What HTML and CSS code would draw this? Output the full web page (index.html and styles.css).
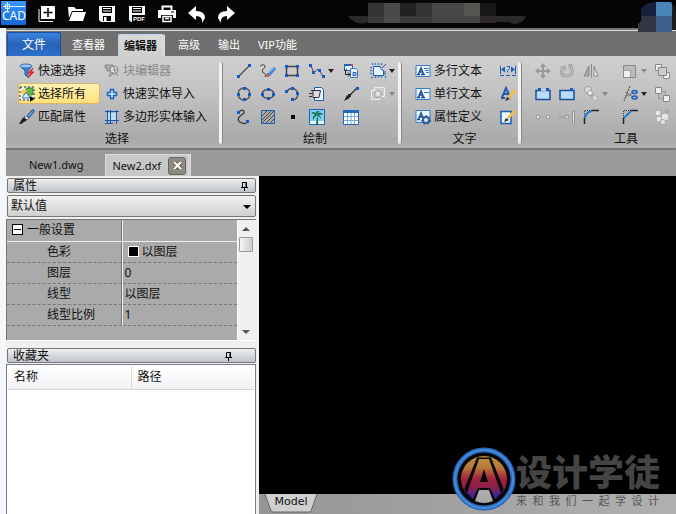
FILE: index.html
```html
<!DOCTYPE html>
<html lang="zh-CN">
	<head>
		<meta charset="UTF-8">
		<title>CAD</title>
		<link rel="stylesheet" href="styles.css">
	</head>
	<body>
		<header class="titlebar">
			<svg class="logo" width="26" height="26" viewBox="0 0 26 26">
				<defs><linearGradient id="lg" x1="0" y1="0" x2="0" y2="1"><stop offset="0" stop-color="#3c98ff"/><stop offset="1" stop-color="#1166d6"/></linearGradient></defs>
				<rect x="0" y="1" width="25" height="24" rx="1" fill="url(#lg)"/>
				<path d="M2 6.500H24M6.500 2V11M4.500 4.500h4v4h-4z" fill="none" stroke="#d8ecff"/>
				<text x="1" y="20" class="logo-text">CAD</text>
			</svg>
			<nav class="quick">
				<button aria-label="新建"><svg width="18" height="18" viewBox="0 0 18 18"><path d="M3 1h13q1 0 1 1v12H3z" fill="#fff"/><path d="M1 4v12.500h14" fill="none" stroke="#fff" stroke-width="1"/><path d="M10 3v9M5.500 7.500h9" stroke="#000" stroke-width="1.500"/></svg></button>
				<button aria-label="打开"><svg width="18" height="18" viewBox="0 0 18 18"><path d="M0 2h6l2 2h7v2H4L1 13z" fill="#fff"/><path d="M4.500 7H18l-3 9H1z" fill="#fff"/></svg></button>
				<button aria-label="保存"><svg width="18" height="18" viewBox="0 0 18 18"><path d="M1 1h16v16H3l-2-2z" fill="#fff"/><path d="M4 2h10v6H4zM5 11h8v5H5z" fill="#000"/><path d="M5 3h8v1H5zM5 5.500h8v1H5zM6 12h2.500v4H6z" fill="#fff"/></svg></button>
				<button aria-label="另存为PDF"><svg width="18" height="18" viewBox="0 0 18 18"><path d="M1 1h16v16H3l-2-2z" fill="#fff"/><path d="M4 2h10v6H4zM4 10h13v7H4z" fill="#000"/><path d="M5 3h8v1H5zM5 5.500h8v1H5z" fill="#fff"/><text x="5" y="16" class="pdf">PDF</text></svg></button>
				<button aria-label="打印"><svg width="18" height="18" viewBox="0 0 18 18"><path d="M4.500 5V1.500h9V5" fill="none" stroke="#fff" stroke-width="2"/><path d="M0 5h18v8h-3v-3H3v3H0z" fill="#fff"/><path d="M13 6.500h3v1h-3z" fill="#000"/><path d="M5 11.500h8v5H5zM7 13.500h4" fill="none" stroke="#fff" stroke-width="1.500"/></svg></button>
				<button aria-label="撤销"><svg width="18" height="18" viewBox="0 0 18 18"><path d="M8 1v5q9 0 9 7l-3 5q1-7-6-7v4L0 8z" fill="#fff"/></svg></button>
				<button aria-label="重做"><svg width="18" height="18" viewBox="0 0 18 18"><path d="M9 1v5q-9 0-9 7l3 5q-1-7 6-7v4l8-7z" fill="#fff"/></svg></button>
			</nav>
			<svg class="caption" width="180" height="22" viewBox="0 0 180 22">
				<path d="M0 13h178q-3 8-12 8l-6-2H20q-12 5-20-6z" fill="#2a2a2a"/>
				<path d="M20 0h16v13H20z" fill="#343435"/><path d="M36 0h16v20H36z" fill="#4a4a4c"/><path d="M52 0h16v13H52z" fill="#222"/><path d="M68 0h16v13H68z" fill="#343435"/><path d="M84 0h32v13H84z" fill="#484849"/><path d="M116 0h16v13h-16z" fill="#555552"/><path d="M132 0h16v13h-16z" fill="#191716"/>
				<path d="M20 13h16v7H20zM52 13h32v7H52z" fill="#3a3a3b"/><path d="M84 13h48v7H84z" fill="#454546"/><path d="M132 13h16v7h-16z" fill="#30292b"/>
			</svg>
			<svg class="avatar" width="38" height="30" viewBox="0 0 38 30">
				<path d="M3 14V7q4-7 15-7v14z" fill="#17213e"/><path d="M18 0h14q2 0 2 2v12H18z" fill="#4886ba"/><path d="M3 14h15v16H0v-8q4-2 3-8z" fill="#333743"/><path d="M18 14h16v16H18z" fill="#3b5f88"/><path d="M34 2q4 3 4 10v16h-4z" fill="#1d1d1e"/>
			</svg>
		</header>
		<div class="app">
			<nav class="tabs">
				<button class="tab file">文件</button>
				<button class="tab">查看器</button>
				<button class="tab active">编辑器</button>
				<button class="tab">高级</button>
				<button class="tab">输出</button>
				<button class="tab">VIP功能</button>
			</nav>
			<div class="ribbon">
				<section class="group select-group">
					<div class="tools">
						<button><svg width="16" height="16" viewBox="0 0 16 16"><path d="M1 3q6 3 12 0L9 8v6l-3-2V8z" fill="#3c7fc4" stroke="#2c62a4"/><ellipse cx="7" cy="3" rx="6" ry="2" fill="#9ec6ea" stroke="#2c6bb5"/><path d="M14 5l-5 5h3l-3 5 6-6h-3z" fill="#f33" stroke="#d22"/></svg>快速选择</button>
						<button disabled><svg width="16" height="16" viewBox="0 0 16 16"><path d="M1 2h8v3H6v3H3V5H1z" fill="#aaa" stroke="#888"/><circle cx="10" cy="7" r="4" fill="#ddd" stroke="#888"/><path d="M10 4v3h3M10 7l4 6M5 14l2-5 3 1z" fill="#bbb" stroke="#888"/></svg>块编辑器</button>
						<button class="hot"><svg width="16" height="16" viewBox="0 0 16 16"><rect x="1" y="1" width="14" height="13" fill="#eef4f4" stroke="#222" stroke-dasharray="2 2"/><rect x="7" y="2" width="7" height="7" rx="1" fill="#60b54b" stroke="#358626"/><circle cx="5" cy="6" r="3" fill="#f1ce55"/><path d="M3 12l4-6 4 6z" fill="#dcefff" stroke="#3772bf"/><path d="M11 10v6l2-2 3-1z"/></svg>选择所有</button>
						<button><svg width="16" height="16" viewBox="0 0 16 16"><path d="M6.500 3.500h3v3h3v3h-3v3h-3v-3h-3v-3h3z" fill="#d9edff" stroke="#1c63bd" stroke-width="1.500"/></svg>快速实体导入</button>
						<button><svg width="16" height="16" viewBox="0 0 16 16"><path d="M8 7l5-6q3-1 2 2l-5 6z" fill="#5a9ad8" stroke="#274f88"/><path d="M6 7l4 3-2 1-6 4H0l3-5z" fill="#222"/><path d="M6 8l3 2" stroke="#ddd" stroke-width="2"/></svg>匹配属性</button>
						<button><svg width="16" height="16" viewBox="0 0 16 16"><path d="M4 4h8v7H4z" fill="#bbdcf5"/><path d="M3.500 1v14M6.500 1v14M12.500 1v14M1 2.500h14M1 11.500h14M1 14.500h8" stroke="#1458ae"/></svg>多边形实体输入</button>
					</div>
					<h2>选择</h2>
				</section>
				<section class="group draw-group">
					<div class="tools">
						<button aria-label="直线"><svg width="16" height="16" viewBox="0 0 16 16"><path d="M3 13L13 3" stroke="#555" stroke-width="1.500"/><path d="M1 12h3v3H1zM12 1h3v3h-3z" fill="#145cc4"/></svg></button>
						<button aria-label="手绘"><svg width="16" height="16" viewBox="0 0 16 16"><path d="M0 3q5-3 5 1-5 5-1 6 3 1 1 4" fill="none" stroke="#444"/><path d="M7 11l5-6q3-2 4 1l-6 7-4 1z" fill="#4287d4"/><path d="M8.500 10l5-5" stroke="#b8d6f4"/><path d="M6 14l1-4 3 3z" fill="#e24834"/></svg></button>
						<button aria-label="矩形"><svg width="16" height="16" viewBox="0 0 16 16"><path d="M2.500 3.500h11v9h-11z" fill="none" stroke="#444" stroke-width="1.500"/><path d="M1 2h3v3H1zM12 2h3v3h-3zM1 11h3v3H1zM12 11h3v3h-3z" fill="#145cc4"/></svg></button>
						<button class="drop" aria-label="多段线"><svg width="16" height="16" viewBox="0 0 16 16"><path d="M2 3l3 7q4-6 6-2l3 6" fill="none" stroke="#444"/><path d="M0 1h3v3H0zM3 8h3v3H3zM9 6h3v3H9zM13 12h3v3h-3z" fill="#145cc4"/></svg></button>
						<button aria-label="插入块"><svg width="16" height="16" viewBox="0 0 16 16"><path d="M1.500 1.500h8v6h-8z" fill="#e6f3ff" stroke="#2266bd"/><path d="M1 1h9v2H1z" fill="#2266bd"/><path d="M8 1h2v2H8z" fill="#e33"/><path d="M7.500 5.500h5l2 2v7h-7z" fill="#eaf5ff" stroke="#3b7cc9"/><path d="M10 9.500h3v3h-3z" fill="#9cc6ee" stroke="#2266bd"/><path d="M2.500 8v3.500H7M5 9.500l2 2-2 2M4 6l-1.500 2L1 6" fill="none" stroke="#222"/></svg></button>
						<button class="drop" aria-label="区域"><svg width="16" height="16" viewBox="0 0 16 16"><path d="M3.500 3.500h7q0 4 3 4v5h-10z" fill="#e5f4ff" stroke="#1c5eb4"/><path d="M2 0l1 2M5 0l1 2M8 0l1 2M11 0l1 2M0 4l2 1M0 7l2 1M0 10l2 1M3 14l-2 1M6 13l-1 2M9 13l-1 2M12 13l-1 2M15 13l1 2M16 1l-4 4M14 9h2M14 11h2" stroke="#1c5eb4"/></svg></button>
						<button aria-label="圆"><svg width="16" height="16" viewBox="0 0 16 16"><circle cx="8" cy="8" r="6" fill="none" stroke="#555" stroke-width="1.500"/><path d="M7 1h3v3H7zM1 7h3v3H1zM12 7h3v3h-3zM7 12h3v3H7z" fill="#145cc4"/></svg></button>
						<button aria-label="椭圆"><svg width="16" height="16" viewBox="0 0 16 16"><ellipse cx="8" cy="8" rx="6" ry="4.500" fill="none" stroke="#555" stroke-width="1.500"/><path d="M7 2h3v3H7zM1 7h3v3H1zM12 7h3v3h-3zM7 11h3v3H7z" fill="#145cc4"/></svg></button>
						<button aria-label="圆弧"><svg width="16" height="16" viewBox="0 0 16 16"><path d="M2 6q7-8 12 1 0 7-6 7" fill="none" stroke="#555" stroke-width="1.500"/><path d="M1 4h3v3H1zM7 1h3v3H7zM12 6h3v3h-3zM7 12h3v3H7z" fill="#145cc4"/></svg></button>
						<button aria-label="剪贴"><svg width="16" height="16" viewBox="0 0 16 16"><path d="M5.500 1.500h7l2 2v11h-9z" fill="#e8f4ff" stroke="#1c5eb4"/><path d="M4 4.500h7.500l-1.500 7H4z" fill="#ddd" stroke="#333"/><path d="M2 4.500h2M0 7.500h4M0 10.500h3" stroke="#333"/></svg></button>
						<button aria-label="引线"><svg width="16" height="16" viewBox="0 0 16 16"><path d="M4 12L14 2" stroke="#333" stroke-width="1.500"/><path d="M1 15l3-6 3 3zM5 8h3v3H5z" fill="#222"/><path d="M13 1h3v3h-3z" fill="#145cc4"/></svg></button>
						<button class="drop" disabled aria-label="遮罩"><svg width="16" height="16" viewBox="0 0 16 16"><path d="M4.500 1.500h10v9h-10z" fill="#ccc" stroke="#eee"/><path d="M1.500 4.500h8v9h-8z" fill="#c8c8c8" stroke="#eee"/><circle cx="8" cy="8" r="3.500" fill="#ddd" stroke="#999"/></svg></button>
						<button aria-label="样条"><svg width="16" height="16" viewBox="0 0 16 16"><path d="M2 3q6-4 6 1-9 6-4 9 4 3 8 0" fill="none" stroke="#444" stroke-width="1.500"/><path d="M1 2h3v3H1zM10 11h3v3h-3z" fill="#145cc4"/></svg></button>
						<button aria-label="填充"><svg width="16" height="16" viewBox="0 0 16 16"><path d="M1.500 1.500h13v13h-13z" fill="#aaa" stroke="#1c5eb4"/><path d="M2 7l5-5M2 11l9-9M2 14L14 2M6 14l8-8M10 14l4-4" stroke="#444"/></svg></button>
						<button aria-label="点"><svg width="16" height="16" viewBox="0 0 16 16"><path d="M7 6h4v4H7z"/></svg></button>
						<button aria-label="图像"><svg width="16" height="16" viewBox="0 0 16 16"><path d="M.5 .5h15v15H.5z" fill="#7fcdf2" stroke="#1768ae"/><path d="M1 12h14v3H1z" fill="#e8f4f8"/><path d="M8 6q2 4 1 9H7q1-5 1-9z" fill="#15734b"/><path d="M8 5Q4 1 2 5q3-1 4 1-3 1-2 5 1-3 4-5 3 2 4 4 0-3-2-4 2-1 4 0-1-4-6-1 1-2 3-2-3-2-4 0z" fill="#13734b"/></svg></button>
						<button aria-label="表格"><svg width="16" height="16" viewBox="0 0 16 16"><path d="M.5 1.500h15v14H.5z" fill="#fff" stroke="#2267bc"/><path d="M0 1h16v3H0z" fill="#2267bc"/><path d="M1 7.500h14M1 11.500h14M4.500 4v11M8 4v11M11.500 4v11" stroke="#73a8dc"/></svg></button>
					</div>
					<h2>绘制</h2>
				</section>
				<section class="group text-group">
					<div class="tools">
						<button><svg width="16" height="16" viewBox="0 0 16 16"><path d="M1 2.500h14v11H1z" fill="#edf6ff" stroke="#397cc4"/><path d="M2 11.500h3M6 11.500h4M3.500 11L6 5l2.500 6M4 9h4" fill="none" stroke="#164c9b" stroke-width="1.500"/><path d="M9 5.500h5M10 7.500h4M11 9.500h3" stroke="#397cc4"/></svg>多行文本</button>
						<button aria-label="标注"><svg width="16" height="16" viewBox="0 0 16 16"><path d="M.5 3v8M15.500 3v8" stroke="#1c5eb4"/><path d="M1 6.500l4-3v6zM15 6.500l-4-3v6z" fill="#1c5eb4"/><path d="M6.500 3.500h3v2l-2 2v2" fill="none" stroke="#1c5eb4"/><path d="M0 12.500h16" stroke="#1c5eb4" stroke-dasharray="4 2"/></svg></button>
						<button><svg width="16" height="16" viewBox="0 0 16 16"><path d="M1 2.500h14v11H1z" fill="#edf6ff" stroke="#397cc4"/><path d="M2 11.500h3M6 11.500h4M3.500 11L6 5l2.500 6M4 9h4" fill="none" stroke="#164c9b" stroke-width="1.500"/><path d="M9 6.500h5" stroke="#397cc4"/></svg>单行文本</button>
						<button aria-label="文字样式"><svg width="16" height="16" viewBox="0 0 16 16"><path d="M2 11.500L6 2l4 9M3 8h6M1 12h4" fill="none" stroke="#1c5eb4" stroke-width="2"/><path d="M9 11l6-7" stroke="#f3c142" stroke-width="3"/><path d="M5 15l2-4 3 2z" fill="#5a2716"/></svg></button>
						<button><svg width="16" height="16" viewBox="0 0 16 16"><path d="M1 1.500h14v12H1z" fill="#edf6ff" stroke="#397cc4"/><path d="M2 10.500h3M3.500 10L6 4l2.500 6M4 8h4" fill="none" stroke="#164c9b" stroke-width="1.500"/><circle cx="11" cy="11" r="3" fill="#d9e9fa" stroke="#315e96" stroke-width="2"/><circle cx="11" cy="11" r="4.500" fill="none" stroke="#315e96" stroke-dasharray="2 2"/></svg>属性定义</button>
						<button aria-label="编辑文字"><svg width="16" height="16" viewBox="0 0 16 16"><path d="M1 2.500h10v12H1z" fill="#edf6ff" stroke="#1c5eb4" stroke-width="1.500"/><path d="M8 9l7-7" stroke="#f3c142" stroke-width="3"/><path d="M4 13l2-4 3 2z" fill="#222"/></svg></button>
					</div>
					<h2>文字</h2>
				</section>
				<section class="group tool-group">
					<div class="tools">
						<button disabled aria-label="移动"><svg width="16" height="16" viewBox="0 0 16 16"><path d="M8 1v14M1 8h14" stroke="#999" stroke-width="2"/><path d="M8 0l3 4H5zM8 16l3-4H5zM0 8l4-3v6zM16 8l-4-3v6z" fill="#999"/></svg></button>
						<button disabled aria-label="旋转"><svg width="16" height="16" viewBox="0 0 16 16"><path d="M4 4Q0 13 8 13q8-1 4-9" fill="none" stroke="#999" stroke-width="3"/><path d="M4 4Q0 13 8 13q8-1 4-9" fill="none" stroke="#d4d4d4"/><path d="M1 3h6v5zM9 1h6l-5 5z" fill="#aaa"/></svg></button>
						<button disabled aria-label="镜像"><svg width="16" height="16" viewBox="0 0 16 16"><path d="M8.500 1v14" stroke="#888"/><path d="M6 3v10H1z" fill="#aaa" stroke="#888"/><path d="M11 3v10h4z" fill="#eee" stroke="#888"/></svg></button>
						<button class="drop" disabled aria-label="缩放"><svg width="16" height="16" viewBox="0 0 16 16"><path d="M1.500 2.500h12v12h-12z" fill="#bbb" stroke="#888"/><path d="M1.500 7.500h7v7h-7z" fill="#eee" stroke="#666" stroke-dasharray="1 1"/></svg></button>
						<button disabled aria-label="前置"><svg width="16" height="16" viewBox="0 0 16 16"><path d="M1.500 1.500h6v6h-6zM9.500 9.500h6v6h-6z" fill="#eee" stroke="#888"/><path d="M4.500 4.500h8v8h-8z" fill="#ccc" stroke="#888"/></svg></button>
						<button aria-label="打断"><svg width="16" height="16" viewBox="0 0 16 16"><path d="M1 4.500h14v9H1z" fill="#b9dcfb" stroke="#1c4e94" stroke-width="1.500"/><path d="M6 3h5v2H6z" fill="#ccc"/><path d="M3 2h3v3H3zM11 2h3v3h-3z" fill="#145cc4"/></svg></button>
						<button aria-label="打断于点"><svg width="16" height="16" viewBox="0 0 16 16"><path d="M1 4.500h14v9H1z" fill="#b9dcfb" stroke="#1c4e94" stroke-width="1.500"/><path d="M11 2h3v3h-3z" fill="#145cc4"/></svg></button>
						<button class="drop" disabled aria-label="复制"><svg width="16" height="16" viewBox="0 0 16 16"><circle cx="5" cy="4" r="3.500" fill="#ddd" stroke="#999"/><path d="M5 6l7 7" stroke="#999" stroke-width="2"/><path d="M9 11l3-2 3 4-3 2z" fill="#ddd" stroke="#aaa"/><circle cx="7" cy="7" r="2.500" fill="#eee" stroke="#999"/></svg></button>
						<button class="drop" aria-label="修剪"><svg width="16" height="16" viewBox="0 0 16 16"><path d="M8 0L2 15" stroke="#333" stroke-dasharray="2 1"/><path d="M3 6l8 5M3 11l8-4" stroke="#777"/><ellipse cx="12.500" cy="6" rx="2.500" ry="1.500" fill="none" stroke="#145cc4" stroke-width="1.500"/><ellipse cx="12.500" cy="11.500" rx="2.500" ry="1.500" fill="none" stroke="#145cc4" stroke-width="1.500"/></svg></button>
						<button disabled aria-label="后置"><svg width="16" height="16" viewBox="0 0 16 16"><path d="M4.500 5.500h7v7h-7z" fill="#bbb" stroke="#999"/><path d="M1.500 1.500h6v6h-6zM9.500 9.500h6v6h-6z" fill="#eee" stroke="#888"/></svg></button>
						<button disabled aria-label="合并"><svg width="16" height="16" viewBox="0 0 16 16"><path d="M1.500 6.500h3v3h-3zM11.500 6.500h3v3h-3z" fill="#eee" stroke="#999"/><path d="M6 8h4" stroke="#999" stroke-dasharray="1 1"/></svg></button>
						<button disabled aria-label="延伸"><svg width="16" height="16" viewBox="0 0 16 16"><path d="M0 8h7" stroke="#888" stroke-dasharray="2 1"/><path d="M6.500 6.500h3v3h-3zM13.500 2.500h2v12h-2z" fill="#ddd" stroke="#999"/></svg></button>
						<button aria-label="圆角"><svg width="16" height="16" viewBox="0 0 16 16"><path d="M1.500 15V9M8 1.500h8" stroke="#222" stroke-width="1.500"/><path d="M1.500 9V1.500H8" fill="none" stroke="#333" stroke-dasharray="1 1"/><path d="M2 9q1-6 7-7" fill="none" stroke="#247bd5" stroke-width="2"/></svg></button>
						<button aria-label="倒角"><svg width="16" height="16" viewBox="0 0 16 16"><path d="M1.500 15V9M8 1.500h8" stroke="#222" stroke-width="1.500"/><path d="M1.500 9V1.500H8" fill="none" stroke="#333" stroke-dasharray="1 1"/><path d="M2 9l7-7" stroke="#247bd5" stroke-width="2"/></svg></button>
						<button disabled aria-label="分解"><svg width="16" height="16" viewBox="0 0 16 16"><g fill="#e6e6e6" stroke="#aaa"><circle cx="4" cy="4" r="3"/><circle cx="5" cy="10" r="3"/><circle cx="11" cy="8" r="4"/><circle cx="9" cy="13" r="2.500"/></g><circle cx="13" cy="2" r="2" fill="#aaa"/></svg></button>
					</div>
					<h2>工具</h2>
				</section>
			</div>
			<nav class="docs">
				<a class="doc" href="#new1">New1.dwg</a>
				<div class="doc open"><a href="#new2">New2.dxf</a><button aria-label="关闭"><svg width="9" height="9" viewBox="0 0 9 9"><path d="M1 1l7 7M8 1L1 8" stroke="#6b6450" stroke-width="4"/><path d="M1 1l7 7M8 1L1 8" stroke="#fff" stroke-width="2"/></svg></button></div>
			</nav>
			<main class="work">
				<aside class="side">
					<div class="bar"><h3>属性</h3><button aria-label="固定"><svg width="9" height="10" viewBox="0 0 9 10"><path d="M2.500 6V1.500h4V6M6 1v5M1 6.500h7M4.500 7v3" fill="none" stroke="#000"/></svg></button></div>
					<div class="combo">
						<select aria-label="默认值"><option>默认值</option></select>
					</div>
					<div class="props">
						<table>
							<tr class="head"><th><span class="fold"></span>一般设置</th><td></td></tr>
							<tr><th>色彩</th><td><span class="swatch"></span>以图层</td></tr>
							<tr><th>图层</th><td>0</td></tr>
							<tr><th>线型</th><td>以图层</td></tr>
							<tr><th>线型比例</th><td>1</td></tr>
						</table>
						<div class="scroll"><span class="up"></span><span class="thumb"></span><span class="down"></span></div>
					</div>
					<div class="bar fav"><h3>收藏夹</h3><button aria-label="固定"><svg width="9" height="10" viewBox="0 0 9 10"><path d="M2.500 6V1.500h4V6M6 1v5M1 6.500h7M4.500 7v3" fill="none" stroke="#000"/></svg></button></div>
					<div class="list">
						<table>
							<tr><th>名称</th><th>路径</th></tr>
						</table>
					</div>
				</aside>
				<section class="view">
					<div class="canvas"></div>
					<div class="sheets"><a class="sheet" href="#model"><svg width="54" height="20" viewBox="0 0 54 20"><path d="M1 0l6 17q1 1 2 1h36q2 0 2-1l6-17" fill="#cfcfcf" stroke="#666"/></svg><span>Model</span></a></div>
					<div class="mark">
						<svg width="64" height="64" viewBox="0 0 64 64">
							<defs><linearGradient id="ag" gradientUnits="userSpaceOnUse" x1="0" y1="9" x2="0" y2="54"><stop offset="0" stop-color="#bd9036"/><stop offset=".25" stop-color="#b87a38"/><stop offset=".5" stop-color="#a42440"/><stop offset=".7" stop-color="#8a2048"/><stop offset=".85" stop-color="#4a2288"/><stop offset="1" stop-color="#312a99"/></linearGradient></defs>
							<circle cx="32" cy="32" r="29" fill="#080709" stroke="#2c66b4" stroke-width="5"/>
							<circle cx="32" cy="32" r="29" fill="none" stroke="#438cdd" stroke-width="2"/>
							<circle cx="32" cy="32" r="23" fill="url(#ag)"/>
							<path d="M26 12h12l12 30-6 12H20l-6-12z" fill="#080709" stroke="#080709" stroke-width="3"/>
							<path d="M27 12h10l12 34-6 6-5-11H26l-5 11-6-6z" fill="url(#ag)"/>
							<path d="M32 22l-4 13h8z" fill="#080709"/>
							<path d="M27 43h10l4 11q-9 4-18 0z" fill="#aaa"/>
						</svg>
						<div class="words"><b>设计学徒</b><small>来&ensp;和&ensp;我&ensp;们&ensp;一&ensp;起&ensp;学&ensp;设&ensp;计</small></div>
					</div>
				</section>
			</main>
		</div>
	</body>
</html>
```
FILE: styles.css
```css
*{padding: 0;margin: 0;box-sizing: border-box;}
body{display: flex;flex-direction: column;min-height: 100vh;background: #f4f7fc;
	font: 12px/16px "Noto Sans","Noto Sans CJK SC",sans-serif;color: #111;}
button{font: inherit;color: inherit;background: none;border: 0;}
a{color: inherit;text-decoration: none;}
svg{display: block;flex: none;}
h2,h3{font-size: 12px;font-weight: normal;}
table{border-collapse: collapse;width: 100%;table-layout: fixed;}
th{font-weight: normal;text-align: left;}

.titlebar{display: flex;height: 28px;background: #050505;position: relative;}
.logo{margin-left: 1px;}
.logo-text{font: 12px "Noto Sans",sans-serif;fill: #fff;}
.pdf{font: bold 6px "Liberation Sans",sans-serif;fill: #fff;}
.quick{display: flex;margin-left: 5px;}
.quick button{width: 30px;display: flex;align-items: center;justify-content: center;}
.caption{margin: 3px auto 0 106px;}
.avatar{position: absolute;right: 0;top: 2px;z-index: 2;}

.app{flex: 1;display: flex;flex-direction: column;margin-left: 6px;}
.tabs{display: flex;align-items: flex-end;gap: 8px;height: 28px;padding-left: 1px;
	background: #6f6f6f;border-top: 2px solid #777;box-shadow: inset 0 1px #ddd;
	font-size: 11px;color: #fff;}
.tab{height: 22px;padding: 0 5px;white-space: nowrap;}
.file{width: 54px;height: 24px;margin-right: -2px;font-size: 12px;border: 1px solid #1b4fa4;border-bottom: 0;
	border-radius: 3px 3px 0 0;background: linear-gradient(#3b83dd,#2763b9 50%,#2b70cd);}
.active{color: #111;font-weight: bold;background: linear-gradient(#d9d9d9,#cfcfcf);
	border: 1px solid #b7d8f5;border-bottom: 0;border-right: 3px double #ddd;border-radius: 2px 2px 0 0;}

.ribbon{display: flex;height: 94px;border-bottom: 2px solid #777;
	background: linear-gradient(#d0d0d0,#c2c2c2 40%,#aaa 90%,#b0b0b0);}
.group{display: flex;flex-direction: column;flex: none;position: relative;}
.group:not(:last-child):after{content: "";position: absolute;right: 0;top: 6px;bottom: 4px;width: 3px;
	border-radius: 2px;background: #f2f2f5;border-right: 1px solid #888;}
.tools{display: grid;grid-auto-rows: 23px;padding: 3px 0 0 13px;}
.tools button{display: flex;align-items: center;gap: 3px;white-space: nowrap;}
.tools button:disabled{color: #888;}
.group h2{text-align: center;line-height: 22px;}
.select-group{width: 217px;}
.select-group .tools{grid-template-columns: 80px 120px;column-gap: 5px;}
.select-group h2{padding-left: 5px;}
.select-group .hot{margin: 2px 0;background: linear-gradient(#fff3b4,#ffdf7c);box-shadow: 0 0 0 1px #d8b765;border-radius: 2px;}
.draw-group{width: 179px;}
.draw-group .tools{grid-template-columns: 24px 24px 25px 34px 27px 30px;}
.draw-group h2{padding-left: 5px;}
.text-group{width: 120px;}
.text-group .tools{grid-template-columns: 85px 16px;}
.text-group h2{padding-left: 5px;}
.tool-group{flex: 1;}
.tool-group .tools{grid-template-columns: 24px 24px 39px 32px 16px;}
.tool-group h2{padding-left: 92px;text-align: left;}
.drop:after{content: "";border: 3px solid transparent;border-top: 4px solid #222;border-bottom: 0;}
.drop:disabled:after{border-top-color: #888;}

.docs{display: flex;align-items: flex-end;height: 26px;background: #999;}
.doc{height: 22px;padding: 0 22px 0 23px;line-height: 22px;font-size: 11px;}
.open{display: flex;align-items: center;gap: 7px;padding: 0 2px 0 6px;background: #c8c8c8;
	border: 1px solid #ddd;border-bottom: 0;border-right: 3px double #ddd;}
.open button{width: 18px;height: 18px;display: flex;align-items: center;justify-content: center;
	border: 1px solid #666;border-radius: 3px;background: #8e8a80;}

.work{flex: 1;display: flex;background: #f0f0f0;}
.side{width: 253px;display: flex;flex-direction: column;padding: 2px 3px 0 0;}
.bar{display: flex;justify-content: space-between;align-items: center;height: 15px;padding: 0 6px 0 5px;
	margin-left: 1px;border: 1px solid #777;border-radius: 2px;background: linear-gradient(#eee,#bfc4cb);}
.combo{position: relative;margin: 2px 0 2px 1px;}
.combo select{display: block;width: 100%;height: 22px;padding: 0 3px;border: 1px solid #777;border-radius: 2px;
	appearance: none;font: inherit;color: #111;background: linear-gradient(#f2f2f2,#d0d0d0);}
.combo:after{content: "";position: absolute;right: 5px;top: 10px;border: 4px solid transparent;border-top-color: #000;border-bottom: 0;}
.props{display: flex;height: 122px;border: 1px solid #777;border-width: 1px 0 0 1px;background: #aaa;border-bottom: 1px solid #fff;}
.props table{height: 105px;}
.props th{width: 115px;height: 21px;padding-left: 40px;border-right: 1px solid #eee;border-bottom: 1px dashed #777;
	background: linear-gradient(#777,#777) right/1px 100% no-repeat;}
.props td{padding-left: 2px;border-bottom: 1px dashed #777;}
.props .head th{padding-left: 5px;border-bottom: 1px solid #eee;}
.props .head td{border-bottom: 1px solid #eee;}
.fold{display: inline-block;width: 11px;height: 11px;margin-right: 4px;vertical-align: -1px;border: 1px solid #000;
	background: linear-gradient(#000,#000) center/7px 1px no-repeat #fff;}
.swatch{display: inline-block;width: 11px;height: 11px;margin: 0 3px;vertical-align: -1px;border: 1px solid #fff;background: #000;}
.scroll{flex: none;width: 19px;padding-right: 2px;display: flex;flex-direction: column;align-items: center;background: #f0f0f0;border-left: 1px solid #fff;}
.up{margin-top: 7px;border: 4px solid transparent;border-bottom-color: #555;border-top: 0;}
.thumb{width: 14px;height: 15px;margin-top: 6px;border: 1px solid #999;border-radius: 1px;background: linear-gradient(90deg,#f5f5f5,#ccc);}
.down{margin: auto 0 6px;border: 4px solid transparent;border-top-color: #555;border-bottom: 0;}
.fav{margin-top: 7px;padding-right: 22px;}
.list{flex: 1;margin-top: 1px;padding: 1px;border: 1px solid #7b8088;border-bottom: 0;background: #fff;}
.list th{height: 23px;padding-left: 6px;border-bottom: 1px solid #d5d5d5;background: linear-gradient(#fff,#f1f2f4);}
.list th + th{border-left: 1px solid #ddd;}

.view{flex: 1;display: flex;flex-direction: column;position: relative;}
.canvas{flex: 1;background: #000;}
.sheets{height: 20px;padding-left: 5px;background: linear-gradient(90deg,#959595,#b0b0b0);}
.sheet{display: grid;width: 54px;font: 11px/16px "DejaVu Sans",sans-serif;}
.sheet svg,.sheet span{grid-area: 1/1;}
.sheet span{text-align: center;}
.mark{position: absolute;right: 16px;bottom: 3px;display: flex;align-items: center;color: #444;}
.words{display: flex;flex-direction: column;}
.words b{font: 900 36px/42px "Noto Sans CJK SC",sans-serif;}
.words small{font: 11px/18px "Noto Sans CJK SC",sans-serif;color: #555;}
```
